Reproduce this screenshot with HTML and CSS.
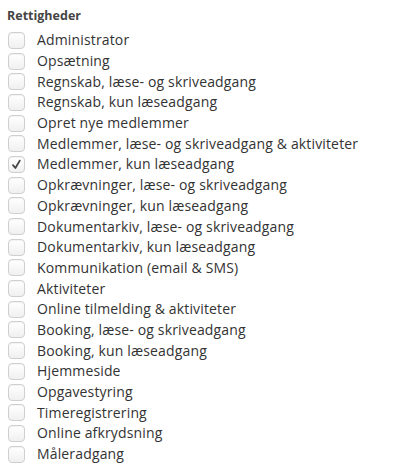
FILE: index.html
```html
<!DOCTYPE html>
<html lang="da">
<head>
<meta charset="utf-8">
<link rel="stylesheet" href="styles.css">
</head>
<body>
<div class="perms">
  <div class="title">Rettigheder</div>
  <ul class="list">
    <li class="row"><span class="box"></span><span class="label">Administrator</span></li>
    <li class="row"><span class="box"></span><span class="label">Opsætning</span></li>
    <li class="row"><span class="box"></span><span class="label">Regnskab, læse- og skriveadgang</span></li>
    <li class="row"><span class="box"></span><span class="label">Regnskab, kun læseadgang</span></li>
    <li class="row"><span class="box"></span><span class="label">Opret nye medlemmer</span></li>
    <li class="row"><span class="box"></span><span class="label">Medlemmer, læse- og skriveadgang &amp; aktiviteter</span></li>
    <li class="row"><span class="box checked"><svg viewBox="0 0 17 17" width="17" height="17"><path d="M5 9.2 L7.4 12 L11.8 4.6" fill="none" stroke="#444" stroke-width="1.8" stroke-linecap="round" stroke-linejoin="round"/></svg></span><span class="label">Medlemmer, kun læseadgang</span></li>
    <li class="row"><span class="box"></span><span class="label">Opkrævninger, læse- og skriveadgang</span></li>
    <li class="row"><span class="box"></span><span class="label">Opkrævninger, kun læseadgang</span></li>
    <li class="row"><span class="box"></span><span class="label">Dokumentarkiv, læse- og skriveadgang</span></li>
    <li class="row"><span class="box"></span><span class="label">Dokumentarkiv, kun læseadgang</span></li>
    <li class="row"><span class="box"></span><span class="label">Kommunikation (email &amp; SMS)</span></li>
    <li class="row"><span class="box"></span><span class="label">Aktiviteter</span></li>
    <li class="row"><span class="box"></span><span class="label">Online tilmelding &amp; aktiviteter</span></li>
    <li class="row"><span class="box"></span><span class="label">Booking, læse- og skriveadgang</span></li>
    <li class="row"><span class="box"></span><span class="label">Booking, kun læseadgang</span></li>
    <li class="row"><span class="box"></span><span class="label">Hjemmeside</span></li>
    <li class="row"><span class="box"></span><span class="label">Opgavestyring</span></li>
    <li class="row"><span class="box"></span><span class="label">Timeregistrering</span></li>
    <li class="row"><span class="box"></span><span class="label">Online afkrydsning</span></li>
    <li class="row"><span class="box"></span><span class="label">Måleradgang</span></li>
  </ul>
</div>
</body>
</html>
```
FILE: styles.css
```css
html, body {
  margin: 0;
  padding: 0;
  background: #fff;
}
body {
  font-family: "Open Sans", "Noto Sans", sans-serif;
  color: #333;
}
.perms {
  padding: 7px 0 0 7px;
}
.title {
  font-size: 12.5px;
  font-weight: 700;
  color: #444;
  line-height: 18px;
  margin-bottom: 5px;
}
.list {
  list-style: none;
  margin: 0;
  padding: 0 0 0 1px;
}
.row {
  display: flex;
  align-items: center;
  height: 20.7px;
}
.box {
  box-sizing: border-box;
  width: 17px;
  height: 17px;
  border: 1px solid #cfcfcf;
  border-radius: 4px;
  background: linear-gradient(#ffffff, #f0f0f0);
  box-shadow: inset 0 1px 1px rgba(0,0,0,0.05);
  flex: none;
  position: relative;
}
.box svg {
  position: absolute;
  left: -1px;
  top: -1px;
}
.label {
  margin-left: 12px;
  font-size: 14px;
  line-height: 20px;
  letter-spacing: 0.15px;
  color: #333;
  white-space: nowrap;
}
```
